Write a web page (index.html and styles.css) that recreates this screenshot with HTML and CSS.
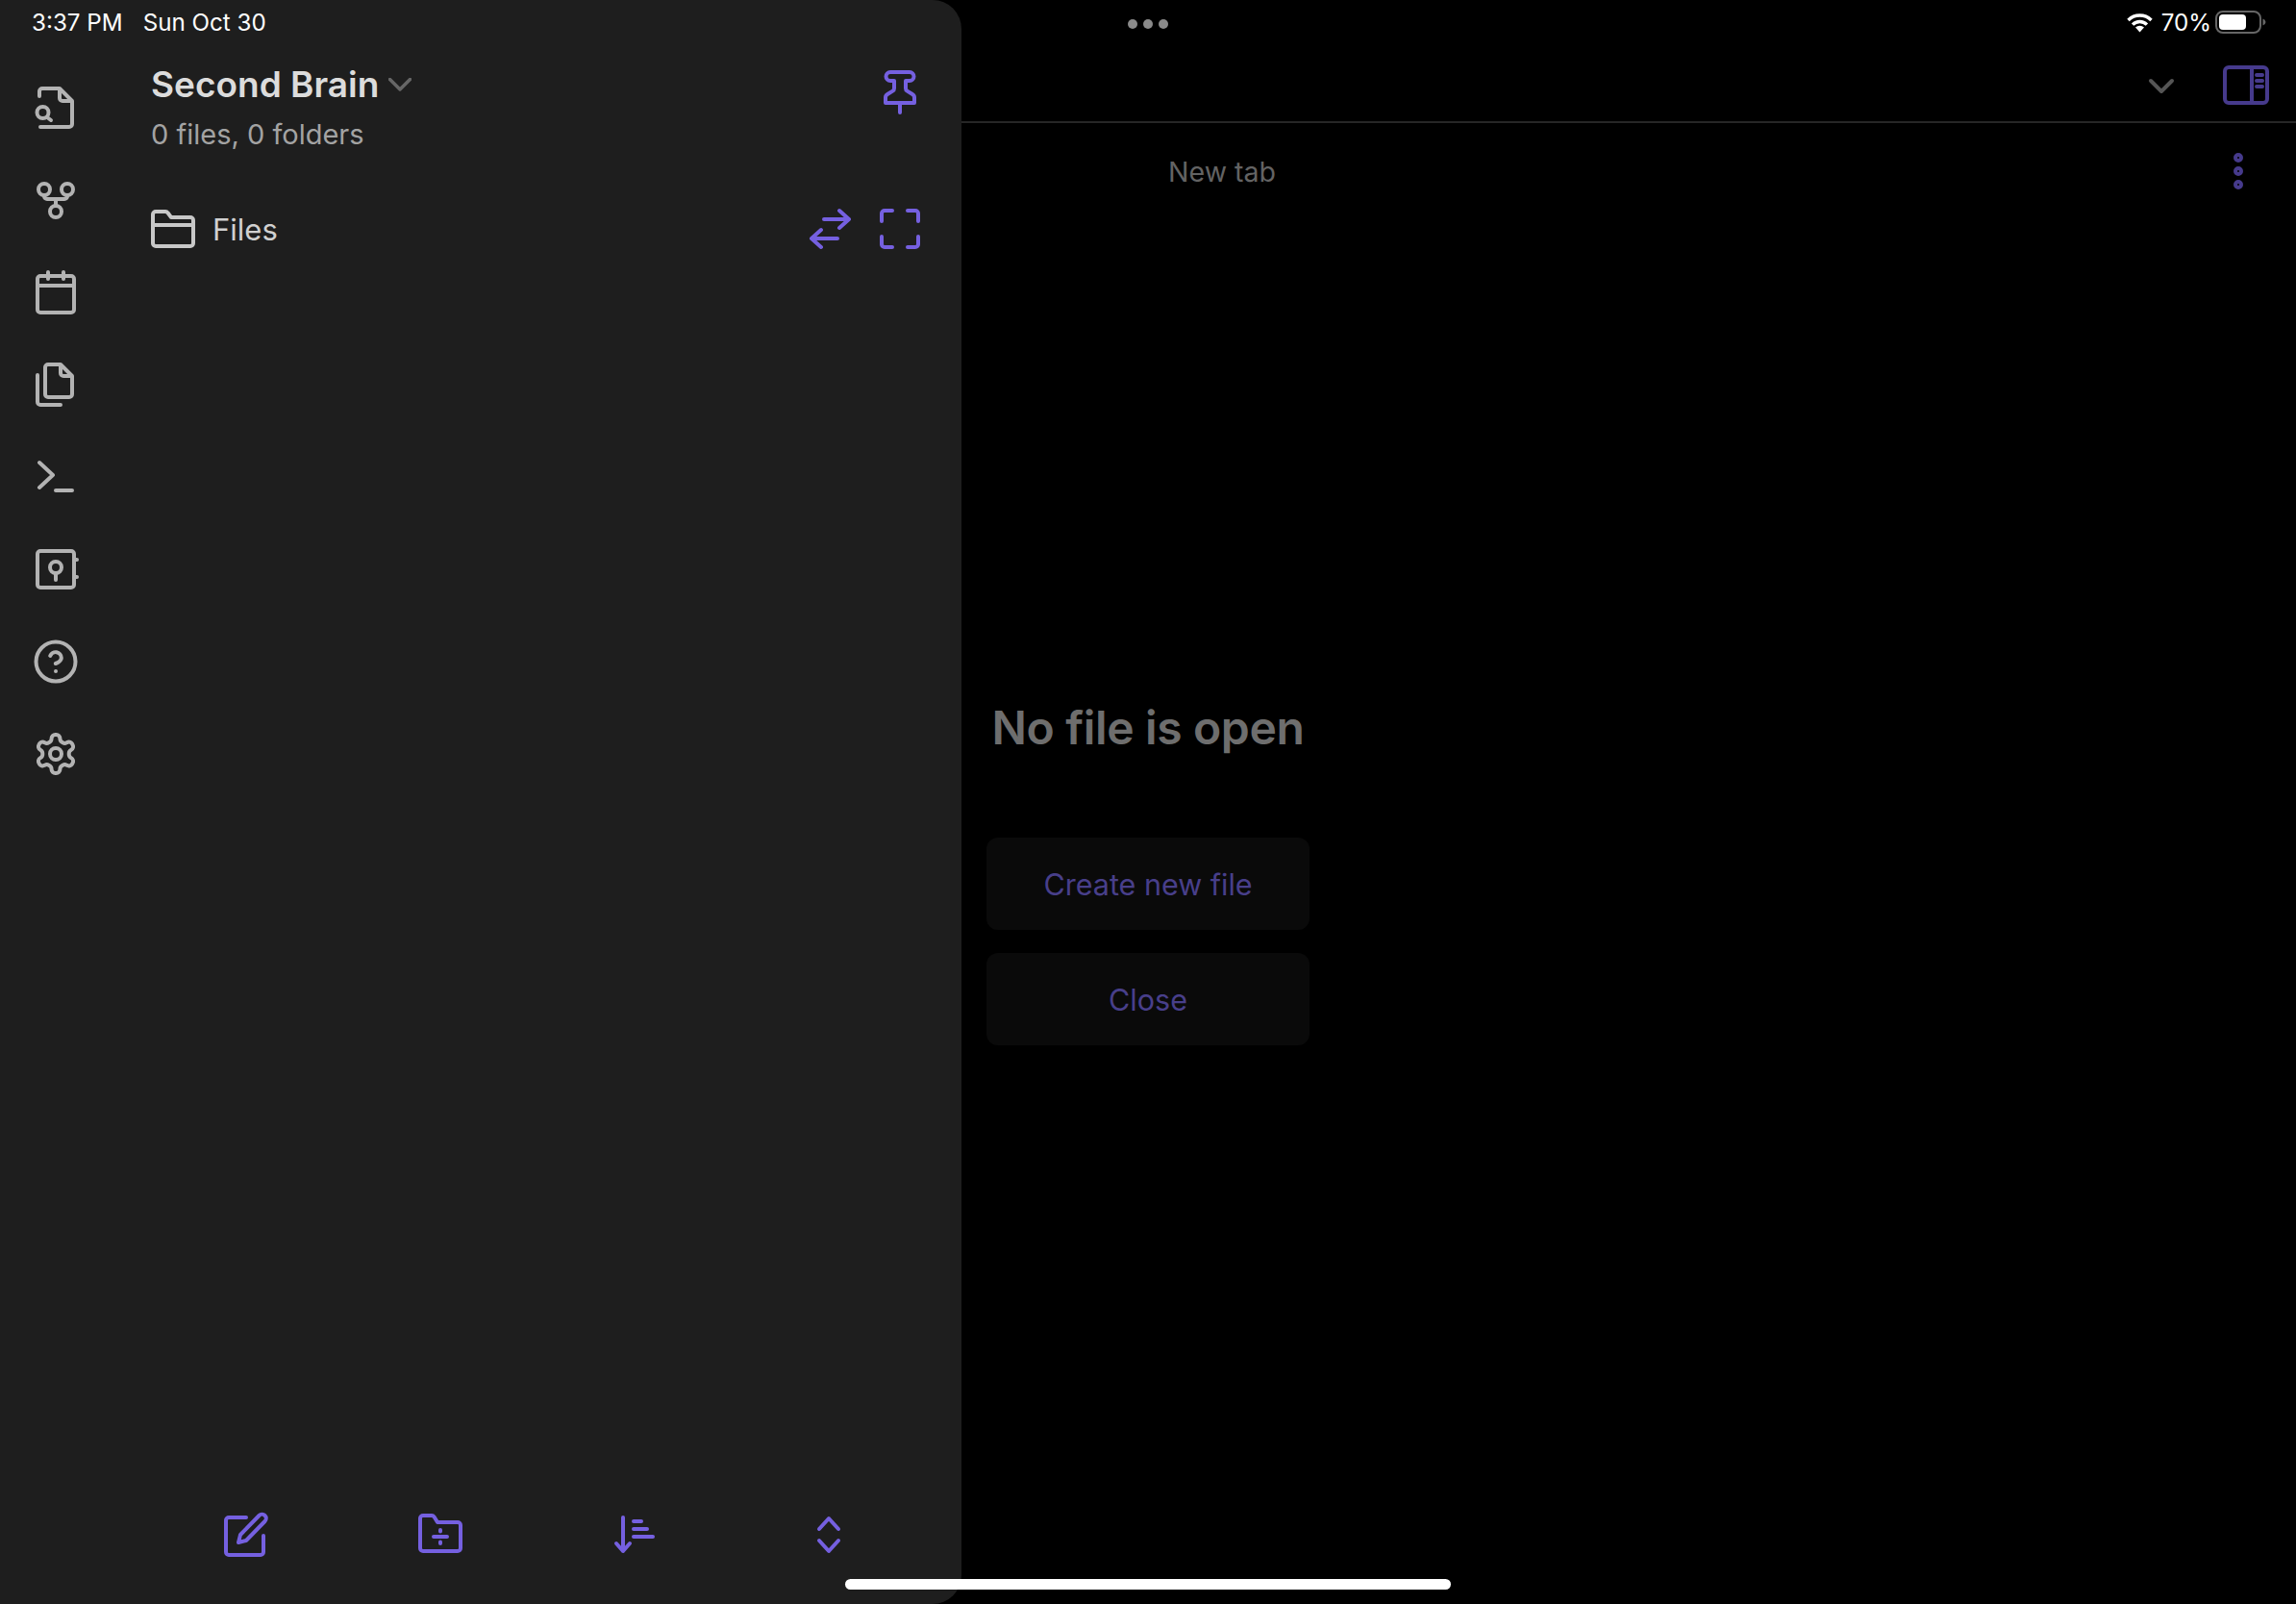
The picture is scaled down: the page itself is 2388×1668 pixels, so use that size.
FILE: index.html
```html
<!DOCTYPE html>
<html lang="en">

<head>
    <meta charset="UTF-8">
    <title>Second Brain</title>
    <link rel="stylesheet" href="styles.css">
</head>

<body>
    <div class="status-bar">
        <div class="status-left"><span>3:37 PM</span><span>Sun Oct 30</span></div>
        <div class="status-dots"><i></i><i></i><i></i></div>
        <div class="status-right">
            <svg class="wifi" viewBox="0 0 27 21">
                <path d="M1.5 8A17 17 0 0 1 25.5 8M6.1 12.6A10.5 10.5 0 0 1 20.9 12.6" fill="none" stroke="#fff" stroke-width="3.4" />
                <path d="M13.5 20.5L9 15.5A6.4 6.4 0 0 1 18 15.5Z" fill="#fff" />
            </svg>
            <span>70%</span>
            <svg class="battery" viewBox="0 0 54 24">
                <rect x="1" y="1" width="46" height="22" rx="7" fill="none" stroke="#666" stroke-width="2" />
                <rect x="4" y="4" width="28" height="16" rx="4" fill="#fff" />
                <path d="M49.5 8.500a4 4 0 0 1 3 3.500a4 4 0 0 1-3 3.500Z" fill="#666" />
            </svg>
        </div>
    </div>

    <div class="workspace">
        <div class="tab-header">
            <svg class="icon dim-gray" viewBox="0 0 48 48"><path d="M13 20L24 31L35 20" /></svg>
            <svg class="icon dim-purple" viewBox="0 0 48 48">
                <rect x="2" y="6" width="44" height="37" rx="4" />
                <path d="M30 6V43M35 14H41M35 20H41M35 26H41" />
            </svg>
        </div>
        <div class="view-header">
            <div class="view-title">New tab</div>
            <svg class="icon dim-purple" viewBox="0 0 48 48">
                <circle cx="24" cy="10" r="3" />
                <circle cx="24" cy="24" r="3" />
                <circle cx="24" cy="38" r="3" />
            </svg>
        </div>
        <div class="empty-state">
            <h2>No file is open</h2>
            <button>Create new file</button>
            <button>Close</button>
        </div>
    </div>

    <div class="drawer">
        <div class="ribbon">
            <svg class="icon gray" viewBox="0 0 48 48">
                <path d="M7 12V7a3 3 0 0 1 3-3H28L41 17V41a3 3 0 0 1-3 3H8M28 4V14a3 3 0 0 0 3 3H41" />
                <circle cx="10.500" cy="29" r="6" />
                <path d="M15 34L19 37" />
            </svg>
            <svg class="icon gray" viewBox="0 0 48 48">
                <circle cx="12" cy="13" r="6" />
                <circle cx="36" cy="13" r="6" />
                <circle cx="24" cy="36" r="6" />
                <path d="M12 19V20a3 3 0 0 0 3 3H33a3 3 0 0 0 3-3V19M24 23V30" />
            </svg>
            <svg class="icon gray" viewBox="0 0 48 48">
                <rect x="5" y="7" width="38" height="38" rx="3" />
                <path d="M5 17H43M16 3V10M32 3V10" />
            </svg>
            <svg class="icon gray" viewBox="0 0 48 48">
                <path d="M16 3H29L41 15V34a3 3 0 0 1-3 3H16a3 3 0 0 1-3-3V6a3 3 0 0 1 3-3ZM29 3V12a3 3 0 0 0 3 3H41" />
                <path d="M5 14V42a3 3 0 0 0 3 3H29" />
            </svg>
            <svg class="icon gray" viewBox="0 0 48 48"><path d="M7 9L21 22L7 35M24 38H41" /></svg>
            <svg class="icon gray" viewBox="0 0 48 48">
                <rect x="5" y="5" width="38" height="38" rx="3" />
                <path d="M43 14H46M43 32H46M24 28V35" />
                <circle cx="24" cy="22" r="6" />
            </svg>
            <svg class="icon gray" viewBox="0 0 48 48">
                <circle cx="24" cy="24" r="20.500" />
                <path d="M18.200 18a6 6 0 0 1 11.600 2c0 4-6 6-6 6M24 34H24.020" />
            </svg>
            <svg class="icon gray" viewBox="0 0 24 24">
                <path class="thin" d="M12.220 2h-.44a2 2 0 0 0-2 2v.18a2 2 0 0 1-1 1.730l-.43.25a2 2 0 0 1-2 0l-.15-.08a2 2 0 0 0-2.730.73l-.22.38a2 2 0 0 0 .73 2.730l.15.1a2 2 0 0 1 1 1.720v.51a2 2 0 0 1-1 1.740l-.15.09a2 2 0 0 0-.73 2.730l.22.38a2 2 0 0 0 2.730.73l.15-.08a2 2 0 0 1 2 0l.43.25a2 2 0 0 1 1 1.730V20a2 2 0 0 0 2 2h.44a2 2 0 0 0 2-2v-.18a2 2 0 0 1 1-1.730l.43-.25a2 2 0 0 1 2 0l.15.08a2 2 0 0 0 2.730-.73l.22-.39a2 2 0 0 0-.73-2.730l-.15-.08a2 2 0 0 1-1-1.740v-.5a2 2 0 0 1 1-1.740l.15-.09a2 2 0 0 0 .73-2.730l-.22-.38a2 2 0 0 0-2.730-.73l-.15.08a2 2 0 0 1-2 0l-.43-.25a2 2 0 0 1-1-1.730V4a2 2 0 0 0-2-2z" />
                <circle class="thin" cx="12" cy="12" r="3" />
            </svg>
        </div>

        <div class="panel">
            <div class="vault-row">
                <div>
                    <div class="vault-name">Second Brain
                        <svg class="icon-chevron" viewBox="0 0 24 14"><path d="M1.500 1.500L12 12L22.500 1.500" /></svg>
                    </div>
                    <div class="vault-count">0 files, 0 folders</div>
                </div>
                <svg class="icon purple pin" viewBox="0 0 48 48">
                    <path d="M14 3H34a4.500 4.500 0 0 1 0 9H30V20a3 3 0 0 0 1.500 2.600L37 26a4 4 0 0 1 2 3.500V35H9V29.500a4 4 0 0 1 2-3.500L16.500 22.600A3 3 0 0 0 18 20V12H14a4.500 4.500 0 0 1 0-9ZM24 35V45" />
                </svg>
            </div>

            <div class="files-row">
                <svg class="icon light" viewBox="0 0 48 48">
                    <path d="M6 6H16a3 3 0 0 1 2.500 1.300L22 12H42a3 3 0 0 1 3 3V39a3 3 0 0 1-3 3H6a3 3 0 0 1-3-3V9a3 3 0 0 1 3-3ZM3 20H45" />
                </svg>
                <span>Files</span>
                <div class="files-actions">
                    <svg class="icon purple" viewBox="0 0 48 48">
                        <path d="M17 14H43M33 5L43 14L33 23M31 34H4M14 25L4 34L14 43" />
                    </svg>
                    <svg class="icon purple" viewBox="0 0 48 48">
                        <path d="M5 16V8a3 3 0 0 1 3-3H16M32 5H40a3 3 0 0 1 3 3V16M43 32V40a3 3 0 0 1-3 3H32M16 43H8a3 3 0 0 1-3-3V32" />
                    </svg>
                </div>
            </div>

            <div class="panel-nav">
                <svg class="icon purple" viewBox="0 0 48 48">
                    <path d="M24 7H6a3 3 0 0 0-3 3V43a3 3 0 0 0 3 3H39a3 3 0 0 0 3-3V26" />
                    <path d="M37.500 5a4.240 4.240 0 0 1 6 6L24 31L16 33L18 25Z" />
                </svg>
                <svg class="icon purple" viewBox="0 0 48 48">
                    <path d="M6 5H15a3 3 0 0 1 2.500 1.300L21 12H42a3 3 0 0 1 3 3V39a3 3 0 0 1-3 3H6a3 3 0 0 1-3-3V8a3 3 0 0 1 3-3Z" />
                    <path d="M17 27H31M24 20V21.500M24 32.500V34" />
                </svg>
                <svg class="icon purple" viewBox="0 0 48 48">
                    <path d="M12 7V42M5 34L12 42L19 34M23 11H31M23 19H37M23 27H43" />
                </svg>
                <svg class="icon purple" viewBox="0 0 48 48">
                    <path d="M14 19L24 8L34 19M14 31L24 42L34 31" />
                </svg>
            </div>
        </div>
    </div>

    <div class="home-indicator"></div>
</body>

</html>
```

FILE: styles.css
```css
* {
    box-sizing: border-box;
}

body {
    margin: 0;
    width: 2388px;
    height: 1668px;
    position: relative;
    overflow: hidden;
    background: #000;
    font-family: Inter, 'Liberation Sans', sans-serif;
}

.icon {
    display: block;
    width: 48px;
    height: 48px;
    flex: none;
    fill: none;
    stroke-width: 4;
    stroke-linecap: round;
    stroke-linejoin: round;
}

.icon .thin {
    stroke-width: 2;
}

.gray {
    stroke: #b3b3b3;
}

.light {
    stroke: #c8c8c8;
}

.purple {
    stroke: #7560e0;
}

.dim-purple {
    stroke: #463a8c;
}

.dim-gray {
    stroke: #555;
}

/* ios status bar */
.status-bar {
    position: absolute;
    top: 0;
    left: 0;
    right: 0;
    z-index: 3;
    height: 46px;
    padding: 0 30px 0 33px;
    display: grid;
    grid-template-columns: 1fr 42px 1fr;
    align-items: center;
    color: #fff;
    font-size: 24.2px;
}

.status-left {
    display: flex;
    gap: 21px;
}

.status-dots {
    margin: 3px 0 0 -2px;
    display: flex;
    gap: 6px;
}

.status-dots i {
    width: 10px;
    height: 10px;
    flex: none;
    border-radius: 50%;
    background: #8a8a8a;
}

.status-right {
    display: flex;
    align-items: center;
    justify-content: flex-end;
    gap: 4px;
}

.wifi {
    width: 27px;
    height: 21px;
    margin-right: 5px;
}

.battery {
    width: 54px;
    height: 24px;
}

/* main pane, the drawer slides over it */
.workspace {
    height: 100%;
    display: flex;
    flex-direction: column;
}

.tab-header {
    height: 128px;
    padding: 50px 28px 0 0;
    border-bottom: 2px solid #262626;
    display: flex;
    align-items: center;
    justify-content: flex-end;
    gap: 40px;
}

.view-header {
    height: 100px;
    padding: 0 36px 0 238px;
    display: flex;
    align-items: center;
}

.view-title {
    flex: 1;
    text-align: center;
    color: #636363;
    font-size: 28.5px;
}

.empty-state {
    padding-top: 499px;
    display: flex;
    flex-direction: column;
    align-items: center;
    gap: 24px;
}

.empty-state h2 {
    margin: 0 0 60px;
    color: #6e6e6e;
    font-size: 48px;
    line-height: 60px;
    font-weight: 600;
    letter-spacing: -0.35px;
}

.empty-state button {
    width: 336px;
    height: 96px;
    border: none;
    border-radius: 12px;
    background: #0a0a0a;
    color: #483f8a;
    font-family: inherit;
    font-size: 30.5px;
}

/* drawer */
.drawer {
    position: absolute;
    top: 0;
    left: 0;
    bottom: 0;
    z-index: 2;
    width: 1000px;
    display: flex;
    background: #1e1e1e;
    border-radius: 0 30px 30px 0;
}

.ribbon {
    flex: none;
    width: 116px;
    padding: 88px 0 0 34px;
    display: flex;
    flex-direction: column;
    gap: 48px;
}

.panel {
    flex: 1;
    min-width: 0;
    padding: 64px 40px 49px 41px;
    display: flex;
    flex-direction: column;
}

.vault-row {
    display: flex;
    justify-content: space-between;
}

.vault-name {
    display: flex;
    align-items: center;
    gap: 10px;
    color: #dcdcdc;
    font-size: 37px;
    line-height: 48px;
    font-weight: 600;
}

.icon-chevron {
    width: 24px;
    height: 14px;
    fill: none;
    stroke: #666;
    stroke-width: 3.5;
    stroke-linecap: round;
    stroke-linejoin: round;
}

.vault-count {
    margin-top: 6px;
    color: #a3a3a3;
    font-size: 29px;
    line-height: 44px;
}

.pin {
    margin-top: 8px;
}

.files-row {
    margin: 52px 0 0 -1px;
    display: flex;
    align-items: center;
    gap: 17px;
    color: #d0d0d0;
    font-size: 31px;
}

.files-actions {
    margin-left: auto;
    display: flex;
    gap: 24px;
}

.panel-nav {
    margin: auto 0 0 -2px;
    display: grid;
    grid-template-columns: repeat(4, 202px);
    justify-items: center;
}

.home-indicator {
    position: absolute;
    left: 879px;
    bottom: 15px;
    z-index: 3;
    width: 630px;
    height: 11px;
    border-radius: 6px;
    background: #fff;
}
```
